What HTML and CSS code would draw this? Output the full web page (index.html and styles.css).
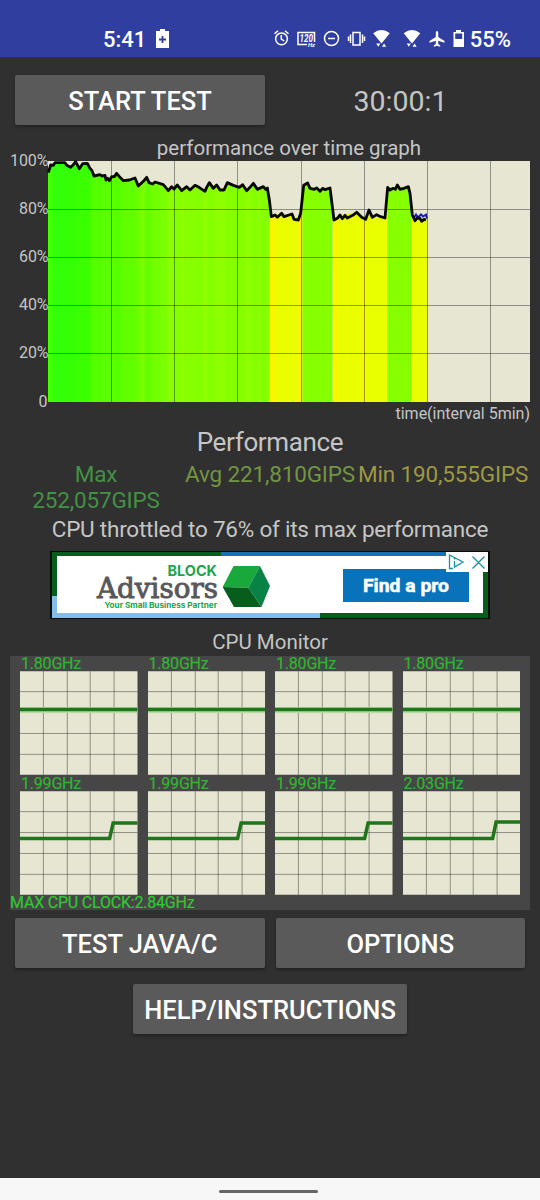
FILE: index.html
```html
<!DOCTYPE html>
<html lang="en">
<head>
<meta charset="utf-8">
<title>CPU Throttling Test</title>
<link rel="stylesheet" href="styles.css">
</head>
<body>
<header class="status">
  <div class="status-left">
    <span>5:41</span>
    <svg width="13" height="19" viewBox="0 0 13 19"><path fill="#fff" d="M4 0h5v2h4v17H0V2h4z"/><path stroke="#303f9f" stroke-width="1.8" d="M3 10.5h7M6.500 7v7"/></svg>
  </div>
  <svg class="status-icons" width="206" height="24" viewBox="270 26 206 24" fill="none" stroke="#fff" stroke-width="1.5">
    <circle cx="281.500" cy="38.800" r="5.900"/><path d="M281.300 35v4l3 2M274.500 33.800l3.500-3M288.500 33.800l-3.500-3"/>
    <path d="M307 44.500h-9V32.500h16.500V42"/><text x="299.500" y="42" class="hz" textLength="13.500" lengthAdjust="spacingAndGlyphs">120</text><text x="308" y="47" class="hz-unit">Hz</text>
    <circle cx="331.500" cy="38.500" r="7"/><path d="M328 38.500h7"/>
    <path d="M353 32.500h7v12.500h-7zM350.500 34.500v8.500M348.500 36.500v4.500M362.500 34.500v8.500M364.500 36.500v4.500"/>
    <g fill="#fff" stroke="none">
      <path id="wifi" d="M373.200 33.300q8.300-6.500 16.600 0L381.500 43.500zM376.200 43.500h4.200l-2.100 3.200zM382 46.700l2.100-3.200 2.100 3.200z"/>
      <use href="#wifi" x="30.500"/>
      <path d="M437 31q1.200 0 1.200 1.500v4.500l6.300 4v1.800l-6.300-2v3.200l2 1.400v1.400l-3.200-1-3.200 1v-1.400l2-1.400v-3.200l-6.300 2V41l6.300-4v-4.500q0-1.500 1.200-1.500"/>
      <path fill-rule="evenodd" d="M456 30h5v2h3v15h-10.500V32h2.500zM455.200 33.500v5.500h7v-5.500z"/>
    </g>
  </svg>
  <span>55%</span>
</header>
<main>
  <div class="row">
    <button class="btn">START TEST</button>
    <div class="timer">30:00:1</div>
  </div>
  <h2 class="graph-title">performance over time graph</h2>
  <svg class="graph" width="540" height="264" viewBox="0 159 540 264">
    <defs>
      <clipPath id="area"><path transform="translate(0 150) scale(.33333)" d="M144 756V68L152 45 160 46 165 38 195 38 200 46 212 52 220 44 227 35 238 56 248 41 262 40 270 55 282 78 300 74 306 78 315 76 318 90 328 92 335 80 350 70 370 92 388 90 405 84 415 108 430 94 440 82 447 98 458 102 465 96 490 104 505 122 515 110 522 117 532 105 545 122 560 110 570 120 585 106 597 112 615 124 628 98 640 115 650 105 660 120 672 120 682 98 700 106 718 112 728 104 740 122 750 112 760 100 772 118 790 110 802 120 814 200 832 190 845 200 876 192 882 208 902 190 911 106 923 99 943 118 990 114 1002 210 1020 195 1070 187 1097 208 1107 180 1117 202 1155 204 1163 112 1225 110 1237 195 1245 212 1282 204V756z"/></clipPath>
      <linearGradient id="bands" gradientUnits="userSpaceOnUse" x1="48" x2="238" y1="0" y2="0">
        <stop offset="0" stop-color="#46ff00"/><stop offset=".035" stop-color="#32ff0c"/><stop offset=".21" stop-color="#38ff00"/><stop offset=".24" stop-color="#56ff00"/><stop offset=".46" stop-color="#62ff00"/><stop offset=".5" stop-color="#7aff00"/><stop offset=".54" stop-color="#6bff00"/><stop offset=".66" stop-color="#86ff00"/><stop offset="1" stop-color="#85ff00"/>
      </linearGradient>
    </defs>
    <path fill="#e7e6d3" d="M48 161h482v241H48z"/>
    <g clip-path="url(#area)">
      <path fill="url(#bands)" d="M48 160h222v242H48z"/>
      <path fill="#96ff00" opacity=".55" d="M167 160h5v242h-5zM180 160h4v242h-4zM203 160h5v242h-5zM215 160h10v242h-10zM245 160h7v242h-7zM257 160h3v242h-3z"/>
      <path fill="#46ff00" opacity=".35" d="M77 160h6v242h-6zM97 160h5v242h-5zM114 160h6v242h-6zM145 160h5v242h-5z"/>
      <path fill="#e9ff00" d="M269.500 160h33v242h-33zM332.500 160h55v242h-55zM411 160h17v242h-17z"/>
      <path fill="#86ff00" d="M302.500 160h30v242h-30zM387.500 160h23.500v242h-23.500z"/>
      <path fill="#fff200" opacity=".7" d="M270 160h5v242h-5zM298 160h3v242h-3zM333 160h4v242h-4zM361 160h4v242h-4z"/>
    </g>
    <path class="grid" d="M111.500 161v241M174.500 161v241M237.500 161v241M301.500 161v241M364.500 161v241M427.500 161v241M490.500 161v241M48 209.500h482M48 257.500h482M48 305.500h482M48 353.500h482"/>
    <path d="M414 217.500l2-3 2 3 3-3 2 2 3-2 1 4" fill="none" stroke="#1c1cb4" stroke-width="2"/>
    <path class="trace" transform="translate(0 150) scale(.33333)" d="M145 68L152 45 160 46 165 38 195 38 200 46 212 52 220 44 227 35 238 56 248 41 262 40 270 55 276 62 282 78 300 74 306 78 315 76 318 90 323 85 328 92 335 80 343 80 350 70 360 82 370 92 388 90 405 84 415 108 430 94 440 82 447 98 458 102 465 96 490 104 505 122 515 110 522 117 532 105 545 122 560 110 570 120 585 106 597 112 615 124 620 112 628 98 640 115 650 105 660 120 672 120 682 98 700 106 718 112 728 104 740 122 750 112 760 100 772 118 790 110 797 118 802 114 808 150 814 200 825 195 832 202 845 190 852 200 876 192 882 208 895 210 902 190 911 106 923 99 930 115 943 118 950 114 960 124 968 115 975 119 990 114 1002 210 1012 205 1020 195 1027 206 1035 196 1042 204 1058 196 1070 187 1085 202 1097 208 1107 180 1117 202 1130 194 1142 200 1155 204 1163 112 1170 120 1180 115 1186 118 1192 105 1200 118 1212 115 1225 110 1230 130 1237 195 1245 212 1252 204 1260 205 1265 214 1272 208 1278 210"/>
    <g class="axis" text-anchor="end">
      <text x="48.500" y="166" textLength="38.500">100%</text><text x="48.500" y="214" textLength="29.500">80%</text><text x="48.500" y="262" textLength="29.500">60%</text><text x="48.500" y="310" textLength="29.500">40%</text><text x="48.500" y="358" textLength="29.500">20%</text><text x="47.500" y="407">0</text>
      <text x="530" y="419" textLength="134.500">time(interval 5min)</text>
    </g>
  </svg>
  <h1 class="perf-title">Performance</h1>
  <div class="stats">
    <span class="max">Max 252,057GIPS</span><span class="avg">Avg 221,810GIPS</span><span class="min">Min 190,555GIPS</span>
  </div>
  <p class="throttle">CPU throttled to 76% of its max performance</p>
  <svg class="ad" width="440" height="68" viewBox="50 551 440 68">
    <path fill="#050d0a" d="M50 551h440v68H50z"/>
    <path fill="#fff" d="M52 552h436v66H52z"/>
    <path fill="#075d1b" d="M52 552h169v4H57v40h-5zM483 572h5v46H320v-5h163z"/>
    <path fill="#1471b4" d="M221 552h225v4H221z"/>
    <path fill="#85bce8" d="M52 596h5v17h263v5H52z"/>
    <text class="block" x="167.500" y="576" textLength="49.500" lengthAdjust="spacingAndGlyphs">BLOCK</text>
    <text class="advisors" x="97" y="598" textLength="121" lengthAdjust="spacingAndGlyphs">Advisors</text>
    <text class="tagline" x="104.500" y="607.500" textLength="112.500" lengthAdjust="spacingAndGlyphs">Your Small Business Partner</text>
    <path fill="#19a83b" d="M222.700 587l10.800-21H260l-11.700 21.700z"/>
    <path fill="#098345" d="M260 566l10 20-8.500 21-13.200-19.300z"/>
    <path fill="#075d1b" d="M222.700 587l25.600.7L261.500 607H234z"/>
    <path fill="#0873bb" d="M343 569h126v33H343z"/>
    <text class="cta" x="363" y="592" textLength="86" lengthAdjust="spacingAndGlyphs">Find a pro</text>
    <path fill="#fff" d="M446 552h42v20h-42z"/>
    <path fill="none" stroke="#1491a8" stroke-width="1.300" d="M453 568.500h-3.500v-13.500L463 562l-8.500 5v-6M454.500 557.500v2M472.500 556.500l12 12M484.500 556.500l-12 12"/>
  </svg>
  <h2 class="monitor-title">CPU Monitor</h2>
  <svg class="defs" width="0" height="0"><defs>
    <g id="cell"><path fill="#e7e6d3" d="M0 0h118v104H0z"/><path class="grid" d="M23.500 0v104M47.500 0v104M70.500 0v104M94.500 0v104M0 20.500h118M0 41.500h118M0 62.500h118M0 83.500h118"/></g>
    <g id="flat"><use href="#cell"/><path class="halo" d="M0 39h118"/><path class="clock" d="M0 38.500h118"/></g>
    <g id="step"><use href="#cell"/><path class="clock" d="M0 47.500h90L93.500 32H118"/></g>
    <g id="step-high"><use href="#cell"/><path class="clock" d="M0 47.500h90L93.500 31H118"/></g>
  </defs></svg>
  <section class="monitor">
    <div class="core"><span>1.80GHz</span><svg viewBox="0 0 118 104"><use href="#flat"/></svg></div>
    <div class="core"><span>1.80GHz</span><svg viewBox="0 0 118 104"><use href="#flat"/></svg></div>
    <div class="core"><span>1.80GHz</span><svg viewBox="0 0 118 104"><use href="#flat"/></svg></div>
    <div class="core"><span>1.80GHz</span><svg viewBox="0 0 118 104"><use href="#flat"/></svg></div>
    <div class="core"><span>1.99GHz</span><svg viewBox="0 0 118 104"><use href="#step"/></svg></div>
    <div class="core"><span>1.99GHz</span><svg viewBox="0 0 118 104"><use href="#step"/></svg></div>
    <div class="core"><span>1.99GHz</span><svg viewBox="0 0 118 104"><use href="#step"/></svg></div>
    <div class="core"><span>2.03GHz</span><svg viewBox="0 0 118 104"><use href="#step-high"/></svg></div>
    <div class="max-clock">MAX CPU CLOCK:2.84GHz</div>
  </section>
  <div class="row actions">
    <button class="btn">TEST JAVA/C</button>
    <button class="btn">OPTIONS</button>
  </div>
  <button class="btn help">HELP/INSTRUCTIONS</button>
</main>
<footer class="nav"><div class="handle"></div></footer>
</body>
</html>
```
FILE: styles.css
```css
* { box-sizing: border-box; }
body {
  margin: 0;
  width: 540px;
  height: 1200px;
  display: flex;
  flex-direction: column;
  background: #303030;
  color: #c5c5c5;
  font-family: Roboto, sans-serif;
  overflow: hidden;
}
h1, h2, p { margin: 0; font-weight: 400; text-align: center; white-space: nowrap; }
svg { display: block; flex: none; }
.status {
  height: 57px;
  padding: 21px 29px 0 103px;
  display: flex;
  align-items: flex-start;
  background: #303f9f;
  color: #fff;
  font-size: 22px;
  font-weight: 500;
  line-height: 37px;
}
.status-left { display: flex; gap: 10px; margin-right: auto; }
.status-left svg { margin-top: 8px; }
.status-icons { margin: 5px -6px 0 0; }
.hz { font: italic 700 10px Roboto, sans-serif; fill: #fff; stroke: none; }
.hz-unit { font: italic 700 6px Roboto, sans-serif; fill: #fff; stroke: none; }
main { flex: 1; display: flex; flex-direction: column; padding-top: 18px; }
.row { display: flex; gap: 11px; padding: 0 15px; }
.btn {
  width: 250px;
  height: 50px;
  padding: 2px 0 0;
  border: 0;
  border-radius: 2px;
  background: #5a5a5b;
  color: #fff;
  font: 500 25.5px Roboto, sans-serif;
  white-space: nowrap;
  box-shadow: 0 2px 3px rgba(0, 0, 0, .3);
}
.timer { flex: 1; height: 50px; font-size: 28.5px; line-height: 53px; text-align: center; }
.graph-title { height: 34px; padding: 11px 0 0 38px; font-size: 20.5px; line-height: 25px; }
.graph { overflow: visible; }
.grid { fill: none; stroke: #000; stroke-opacity: .38; stroke-width: 1; }
.trace { fill: none; stroke: #080808; stroke-width: 8.5; stroke-linejoin: round; }
.axis text { font-size: 16px; fill: #c5c5c5; }
.perf-title { height: 38px; font-size: 26px; letter-spacing: -.35px; line-height: 38px; }
.stats {
  height: 54px;
  display: grid;
  grid-template-columns: 164px 184px 164px;
  justify-content: center;
  font-size: 22.5px;
  letter-spacing: -.15px;
  line-height: 26px;
  text-align: center;
}
.max { color: #439143; }
.avg { color: #729443; white-space: nowrap; }
.min { color: #9c9844; white-space: nowrap; margin-left: -4px; }
.throttle { height: 36px; font-size: 22.5px; letter-spacing: -.22px; line-height: 28px; }
.ad { margin-left: 50px; }
.block { font: 700 14.5px Inter, sans-serif; fill: #20a548; }
.advisors { font: 400 27px "DejaVu Serif", serif; fill: #58585b; stroke: #58585b; stroke-width: .9px; }
.tagline { font: 700 8px Inter, sans-serif; fill: #20a548; }
.cta { font: 700 19px Roboto, sans-serif; fill: #fff; stroke: #fff; stroke-width: .5px; }
.monitor-title { height: 37px; padding-top: 9px; font-size: 20.5px; line-height: 28px; }
.defs { position: absolute; }
.monitor {
  height: 254px;
  margin: 0 10px;
  padding: 0 10px;
  display: grid;
  grid-template-columns: repeat(4, 117.500px);
  grid-template-rows: 119px 120px 15px;
  justify-content: space-between;
  background: #464646;
  color: #32b432;
  font-size: 16px;
  letter-spacing: -.2px;
}
.core { display: flex; flex-direction: column; justify-content: flex-end; }
.core span { height: 15px; line-height: 16px; padding-left: 1px; -webkit-text-stroke: .2px #32b432; }
.core svg { width: 117.500px; height: 104px; }
.clock { fill: none; stroke: #1f751a; stroke-width: 3.500; }
.halo { fill: none; stroke: #b9dba1; stroke-width: 6; }
.max-clock { grid-column: 1 / -1; margin-left: -10px; line-height: 16px; color: #32c832; -webkit-text-stroke: .2px #32c832; }
.actions { margin-top: 8px; }
.help { width: 274px; align-self: center; margin-top: 16px; }
.nav { height: 22px; background: #f7f7f7; display: flex; justify-content: center; }
.handle { width: 99px; height: 3px; margin: 12px 3px 0 0; border-radius: 2px; background: #666; }
```
